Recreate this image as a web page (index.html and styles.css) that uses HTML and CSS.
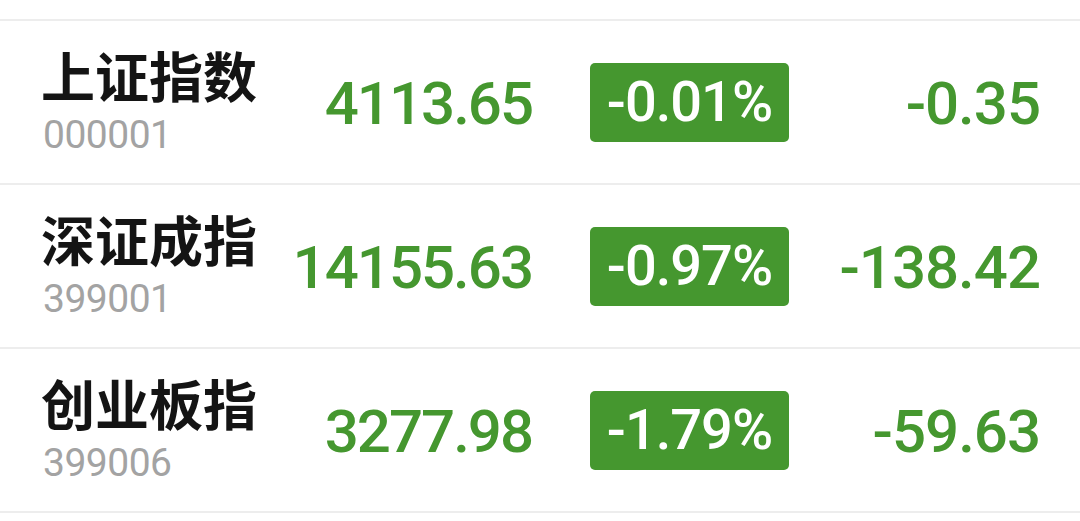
FILE: index.html
```html
<!DOCTYPE html>
<html lang="zh-CN">
<head>
<meta charset="utf-8">
<title>指数</title>
<link rel="stylesheet" href="styles.css">
</head>
<body>
<div class="list">
  <div class="row">
    <div class="name-col">
      <div class="name">上证指数</div>
      <div class="code">000001</div>
    </div>
    <div class="price">4113.65</div>
    <div class="badge">-0.01%</div>
    <div class="change">-0.35</div>
  </div>
  <div class="row">
    <div class="name-col">
      <div class="name">深证成指</div>
      <div class="code">399001</div>
    </div>
    <div class="price">14155.63</div>
    <div class="badge">-0.97%</div>
    <div class="change">-138.42</div>
  </div>
  <div class="row">
    <div class="name-col">
      <div class="name">创业板指</div>
      <div class="code">399006</div>
    </div>
    <div class="price">3277.98</div>
    <div class="badge">-1.79%</div>
    <div class="change">-59.63</div>
  </div>
</div>
</body>
</html>
```

FILE: styles.css
```css
html, body {
  margin: 0;
  padding: 0;
  background: #ffffff;
}

body {
  width: 1080px;
  height: 521px;
  overflow: hidden;
  font-family: Roboto, "Noto Sans CJK SC", sans-serif;
}

.list {
  padding-top: 19px;
  border-bottom: 2px solid #ededed;
}

.row {
  display: flex;
  align-items: center;
  height: 162px;
  border-top: 2px solid #ededed;
  padding-left: 41px;
}

.name-col {
  width: 240px;
  display: flex;
  flex-direction: column;
}

.name {
  font-family: "Noto Sans CJK SC", sans-serif;
  font-weight: 700;
  font-size: 54px;
  line-height: 56px;
  color: #141414;
  margin-top: -2px;
}

.code {
  font-family: Roboto, sans-serif;
  font-size: 39px;
  line-height: 40px;
  color: #a3a3a3;
  letter-spacing: -0.5px;
  margin-top: 12px;
  padding-left: 2px;
}

.price {
  width: 251px;
  text-align: right;
  font-family: Roboto, sans-serif;
  font-weight: 500;
  font-size: 60px;
  letter-spacing: -2px;
  color: #45972f;
  line-height: 70px;
  margin-top: 4px;
}

.badge {
  margin-left: 58px;
  width: 199px;
  height: 79px;
  border-radius: 5px;
  background: #45972f;
  color: #ffffff;
  display: flex;
  align-items: center;
  justify-content: center;
  font-family: Roboto, sans-serif;
  font-size: 56px;
  font-weight: 500;
  letter-spacing: -1px;
}

.change {
  width: 251px;
  text-align: right;
  font-family: Roboto, sans-serif;
  font-weight: 500;
  font-size: 60px;
  letter-spacing: -1px;
  color: #45972f;
  line-height: 70px;
  margin-top: 4px;
}
```
